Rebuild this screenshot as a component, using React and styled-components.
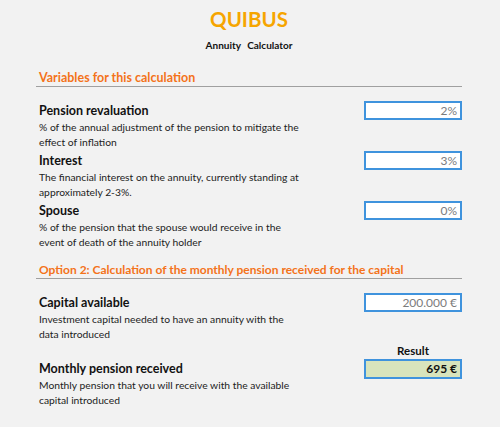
import React from 'react'
import styled, { createGlobalStyle } from 'styled-components'

const GlobalStyle = createGlobalStyle`
  html, body {
    margin: 0;
    padding: 0;
    background: #f2f2f2;
  }
  body {
    font-family: Lato, "Open Sans", sans-serif;
    color: #1a1a1a;
  }
`

const Page = styled.div`
  width: 500px;
  height: 427px;
  box-sizing: border-box;
  padding: 5px 38px 0 36px;
  display: flex;
  flex-direction: column;
`

const Header = styled.header`
  display: flex;
  flex-direction: column;
  align-items: center;
`

const Title = styled.h1`
  margin: 0;
  font-size: 20.5px;
  line-height: 28px;
  font-weight: 700;
  color: #f6a500;
`

const Subtitle = styled.div`
  font-size: 10px;
  line-height: 14px;
  font-weight: 700;
  color: #111;
  margin-top: 5px;
  word-spacing: 4px;
`

const SectionTitle = styled.h2`
  margin: ${p => p.$top}px 0 ${p => p.$bottom}px;
  padding: 0 0 0 3px;
  font-size: ${p => p.$size || 12.5}px;
  line-height: 16px;
  font-weight: 700;
  color: #f4731a;
  border-bottom: 1px solid #a0a0a0;
`

const Row = styled.div`
  display: grid;
  grid-template-columns: 1fr 98px;
  align-items: start;
  margin-bottom: 2px;
`

const Label = styled.div`
  padding: ${p => (p.$offset ? '16px' : '0')} 0 0 3px;
`

const FieldName = styled.div`
  font-size: 12.5px;
  line-height: 19px;
  font-weight: 700;
  color: #111;
`

const FieldDesc = styled.div`
  font-size: 10.3px;
  line-height: 14.5px;
  color: #222;
`

const ValueCol = styled.div`
  display: flex;
  flex-direction: column;
  align-items: stretch;
`

const ResultLabel = styled.div`
  font-size: 11.5px;
  line-height: 16px;
  font-weight: 700;
  color: #111;
  text-align: center;
`

const ValueBox = styled.div`
  box-sizing: border-box;
  height: ${p => (p.$result ? 20 : 19)}px;
  border: 2px solid #3f93dd;
  background: ${p => (p.$result ? '#d8e4bc' : '#ffffff')};
  color: ${p => (p.$result ? '#111' : '#7c7c7c')};
  font-weight: ${p => (p.$result ? 700 : 400)};
  font-size: 12px;
  line-height: 15px;
  text-align: right;
  padding-right: 3px;
`

const Field = ({ name, lines, value, result }) => (
  <Row>
    <Label $offset={result}>
      <FieldName>{name}</FieldName>
      <FieldDesc>
        {lines[0]}
        <br />
        {lines[1]}
      </FieldDesc>
    </Label>
    <ValueCol>
      {result && <ResultLabel>Result</ResultLabel>}
      <ValueBox $result={result}>{value}</ValueBox>
    </ValueCol>
  </Row>
)

export default function App() {
  return (
    <>
      <GlobalStyle />
      <Page>
        <Header>
          <Title>QUIBUS</Title>
          <Subtitle>Annuity Calculator</Subtitle>
        </Header>

        <SectionTitle $top={18} $bottom={14}>Variables for this calculation</SectionTitle>
        <Field
          name="Pension revaluation"
          lines={['% of the annual adjustment of the pension to mitigate the', 'effect of inflation']}
          value="2%"
        />
        <Field
          name="Interest"
          lines={['The financial interest on the annuity, currently standing at', 'approximately 2-3%.']}
          value="3%"
        />
        <Field
          name="Spouse"
          lines={['% of the pension that the spouse would receive in the', 'event of death of the annuity holder']}
          value="0%"
        />

        <SectionTitle $top={11} $bottom={14} $size={12}>
          Option 2: Calculation of the monthly pension received for the capital
        </SectionTitle>
        <Field
          name="Capital available"
          lines={['Investment capital needed to have an annuity with the', 'data introduced']}
          value="200.000 €"
        />
        <Field
          name="Monthly pension received"
          lines={['Monthly pension that you will receive with the available', 'capital introduced']}
          value="695 €"
          result
        />
      </Page>
    </>
  )
}
